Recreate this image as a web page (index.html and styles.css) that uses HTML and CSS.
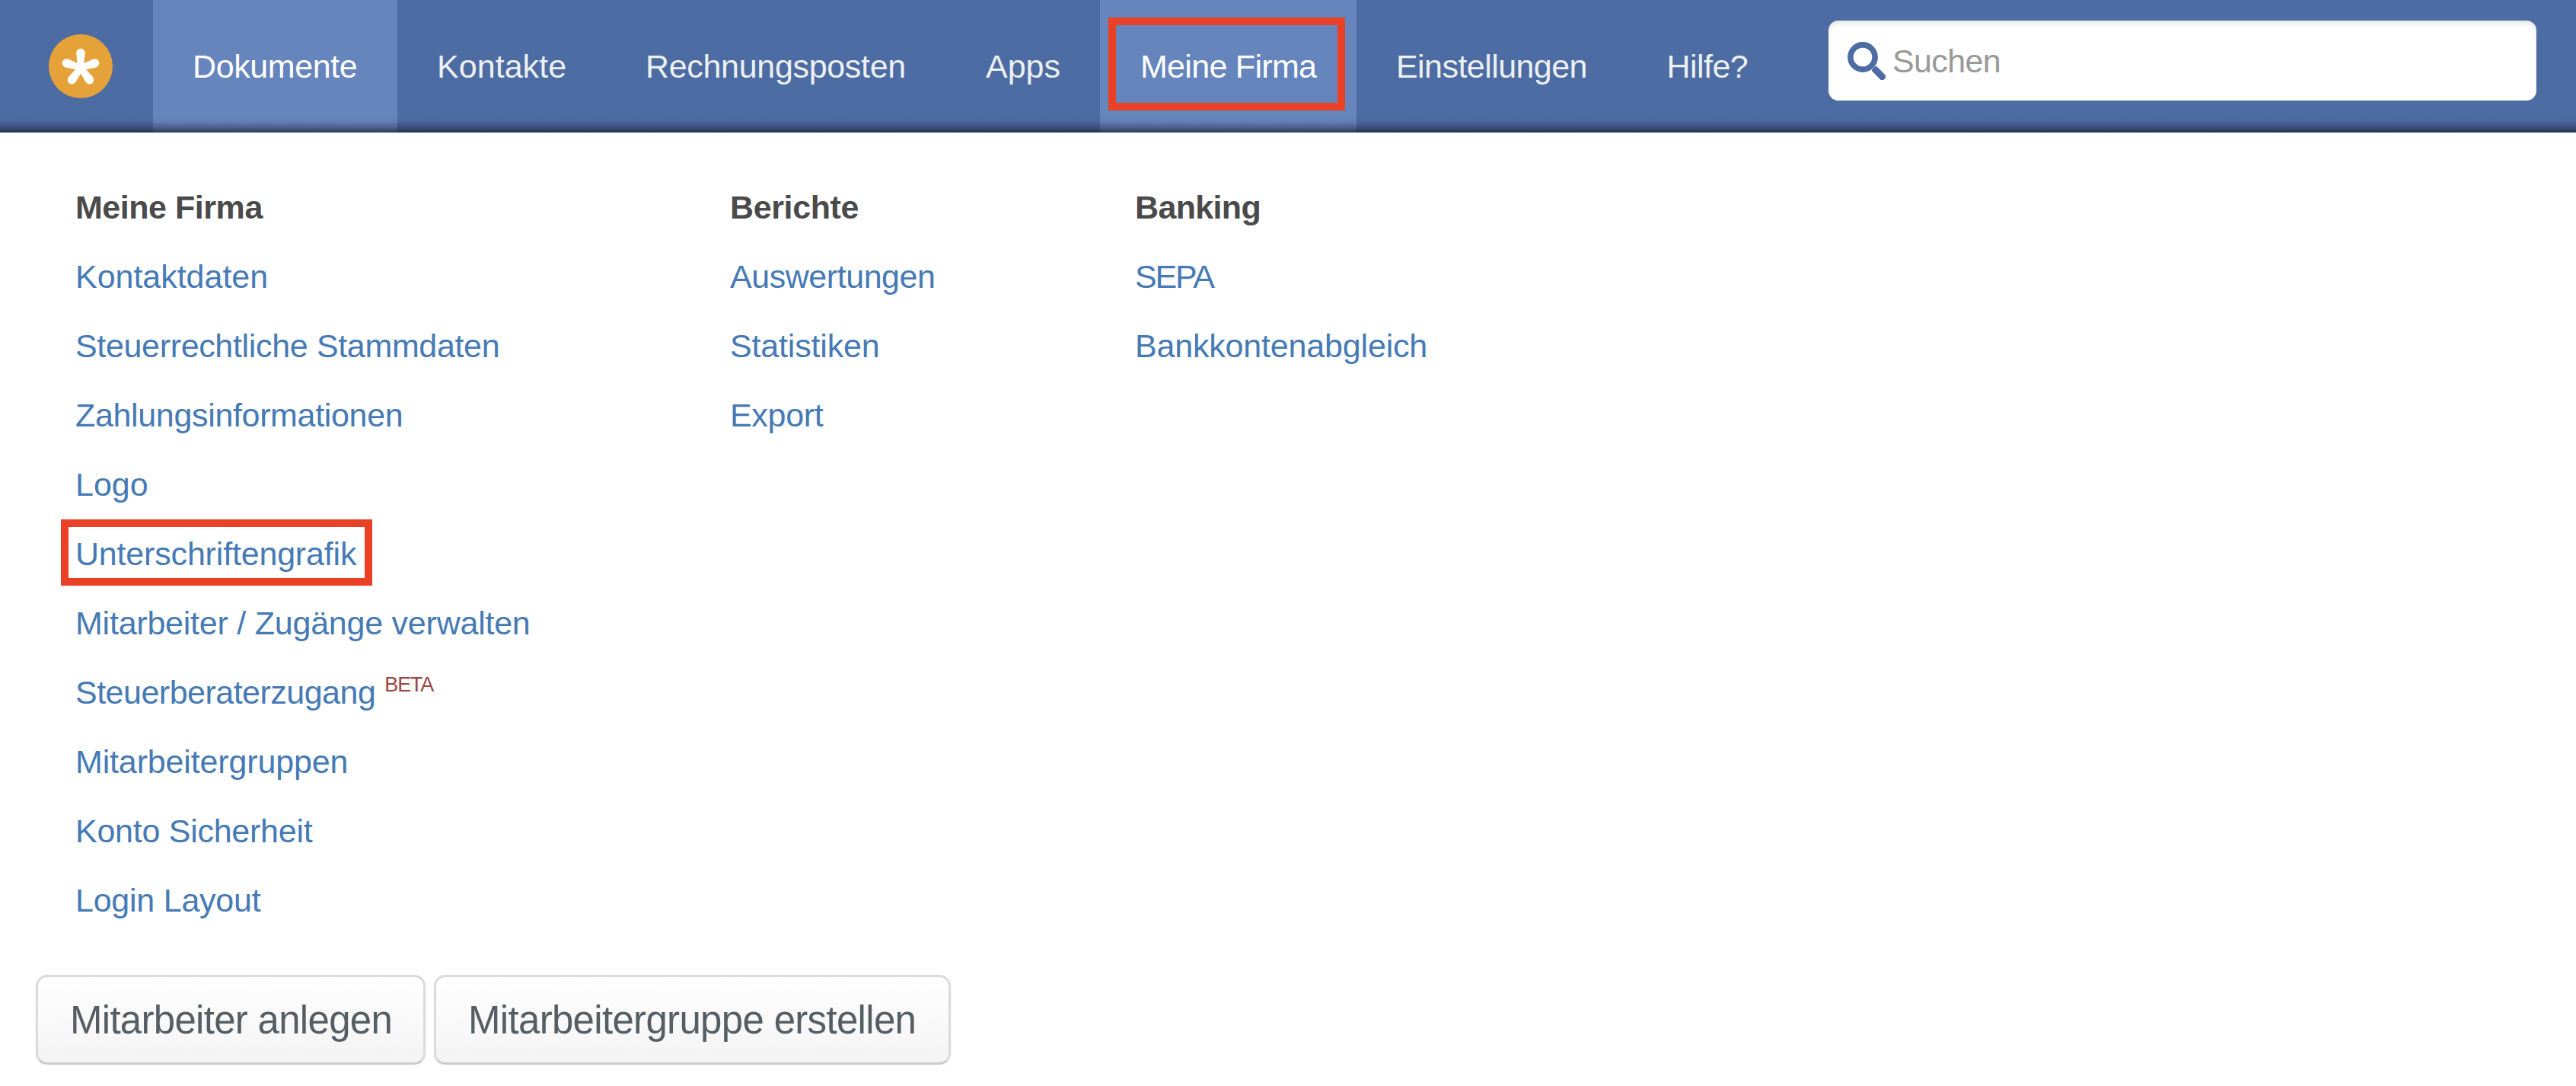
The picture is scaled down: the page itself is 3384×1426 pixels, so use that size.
FILE: index.html
```html
<!DOCTYPE html>
<html lang="de">
<head>
<meta charset="utf-8">
<title>Meine Firma</title>
<link rel="stylesheet" href="styles.css">
</head>
<body>
<header class="topbar">
  <a class="brand" href="#">
    <svg class="brand-icon" viewBox="-42 -42 84 84" aria-hidden="true">
      <circle r="42" fill="#e5a239"/>
      <g transform="translate(0 2)" fill="#fff">
        <path id="arm" d="M-3.8 0 L-5.8 -19.4 A5.8 5.9 0 0 1 5.8 -19.4 L3.8 0 Z"/>
        <use href="#arm" transform="rotate(72)"/>
        <use href="#arm" transform="rotate(144)"/>
        <use href="#arm" transform="rotate(216)"/>
        <use href="#arm" transform="rotate(288)"/>
      </g>
    </svg>
  </a>
  <nav class="nav">
    <a class="nav-item nav-dokumente active" href="#">Dokumente</a>
    <a class="nav-item nav-kontakte" href="#">Kontakte</a>
    <a class="nav-item nav-posten" href="#">Rechnungsposten</a>
    <a class="nav-item nav-apps" href="#">Apps</a>
    <a class="nav-item nav-firma active marked" href="#">Meine Firma</a>
    <a class="nav-item nav-einstellungen" href="#">Einstellungen</a>
    <a class="nav-item nav-hilfe" href="#">Hilfe?</a>
  </nav>
  <label class="search">
    <svg class="search-icon" viewBox="0 0 50 50" aria-hidden="true">
      <circle cx="20" cy="20" r="16.1" fill="none" stroke="#4c6ca3" stroke-width="7.6"/>
      <rect x="20" y="-4.4" width="20.5" height="8.8" rx="2.6" transform="translate(20 20) rotate(45)" fill="#4c6ca3"/>
    </svg>
    <span class="search-text">Suchen</span>
  </label>
</header>
<main class="menu">
  <div class="columns">
    <section class="column">
      <h2 class="heading h-firma">Meine Firma</h2>
      <a class="link l-kontaktdaten" href="#">Kontaktdaten</a>
      <a class="link l-stammdaten" href="#">Steuerrechtliche Stammdaten</a>
      <a class="link l-zahlung" href="#">Zahlungsinformationen</a>
      <a class="link l-logo" href="#">Logo</a>
      <a class="link l-unterschrift marked" href="#">Unterschriftengrafik</a>
      <a class="link l-mitarbeiter" href="#">Mitarbeiter / Zugänge verwalten</a>
      <a class="link l-berater" href="#">Steuerberaterzugang<span class="beta">BETA</span></a>
      <a class="link l-gruppen" href="#">Mitarbeitergruppen</a>
      <a class="link l-konto" href="#">Konto Sicherheit</a>
      <a class="link l-login" href="#">Login Layout</a>
    </section>
    <section class="column">
      <h2 class="heading h-berichte">Berichte</h2>
      <a class="link l-auswertungen" href="#">Auswertungen</a>
      <a class="link l-statistiken" href="#">Statistiken</a>
      <a class="link l-export" href="#">Export</a>
    </section>
    <section class="column">
      <h2 class="heading h-banking">Banking</h2>
      <a class="link l-sepa" href="#">SEPA</a>
      <a class="link l-bank" href="#">Bankkontenabgleich</a>
    </section>
  </div>
  <div class="actions">
    <button class="button button-anlegen">Mitarbeiter anlegen</button>
    <button class="button button-gruppe">Mitarbeitergruppe erstellen</button>
  </div>
</main>
</body>
</html>
```
FILE: styles.css
```css
*,
*::after { box-sizing: border-box; }

body {
  margin: 0;
  background: #fff;
  font-family: "Liberation Sans", Arial, sans-serif;
  font-size: 43px;
}

a { text-decoration: none; }

/* Top bar */
.topbar {
  position: relative;
  display: flex;
  height: 174px;
  padding-right: 52px;
  background: #4c6ca3;
}

.topbar::after {
  content: "";
  position: absolute;
  left: 0;
  right: 0;
  bottom: 0;
  height: 22px;
  background: linear-gradient(rgba(16, 20, 30, 0), rgba(16, 20, 30, 0.05) 35%, rgba(16, 20, 30, 0.3) 68%, rgba(16, 20, 30, 0.62) 96%, rgba(16, 20, 30, 0.68));
  pointer-events: none;
}

.brand {
  flex: none;
  width: 201px;
  padding: 45px 0 0 64px;
}

.brand-icon {
  display: block;
  width: 84px;
  height: 84px;
}

.nav {
  display: flex;
  flex: none;
  width: 2201px;
}

.nav-item {
  position: relative;
  flex: none;
  padding-left: 52px;
  line-height: 174px;
  white-space: nowrap;
  color: #ecf0f1;
}

.nav-item.active {
  background: #6685bd;
  color: #fff;
}

.nav-dokumente { width: 321px; letter-spacing: -0.4px; }
.nav-kontakte { width: 274px; letter-spacing: 0.05px; }
.nav-posten { width: 447px; letter-spacing: -0.32px; }
.nav-apps { width: 202px; letter-spacing: 0; }
.nav-firma { width: 337px; padding-left: 53px; letter-spacing: -0.7px; }
.nav-einstellungen { width: 355.6px; letter-spacing: -0.56px; }
.nav-hilfe { width: 212px; letter-spacing: -0.55px; }

/* Red highlight frames */
.marked { position: relative; }

.marked::after {
  content: "";
  position: absolute;
  border: 10px solid #ea4025;
}

.nav-item.marked::after {
  left: 11px;
  top: 23px;
  width: 311px;
  height: 122px;
}

.link.marked::after {
  left: -19px;
  top: 0;
  width: 409px;
  height: 87px;
}

.search {
  display: flex;
  flex: 1;
  height: 105px;
  margin-top: 27px;
  padding: 0 25px;
  border-radius: 13px;
  background: #fff;
  box-shadow: inset 0 5px 6px -1px rgba(0, 0, 0, 0.1);
}

.search-icon {
  width: 50px;
  height: 50px;
  margin: 28px 9px 0 0;
}

.search-text {
  line-height: 106px;
  letter-spacing: -0.65px;
  color: #999;
}

/* Menu */
.menu { padding-top: 53px; }

.columns {
  display: grid;
  grid-template-columns: 860px 532px 1fr;
  padding-left: 99px;
}

.heading,
.link {
  display: block;
  height: 91px;
  margin: 0;
  font-size: 43px;
  line-height: 91px;
  white-space: nowrap;
}

.heading { font-weight: bold; color: #4a4a4a; }
.link { color: #467ab5; }

.h-firma { letter-spacing: -0.46px; }
.h-berichte { letter-spacing: -0.38px; }
.h-banking { letter-spacing: -0.66px; }
.l-kontaktdaten { letter-spacing: -0.03px; }
.l-stammdaten { letter-spacing: -0.34px; }
.l-zahlung { letter-spacing: -0.34px; }
.l-logo { letter-spacing: 0; }
.l-unterschrift { letter-spacing: -0.18px; }
.l-mitarbeiter { letter-spacing: -0.23px; }
.l-berater { letter-spacing: -0.51px; }
.l-gruppen { letter-spacing: -0.15px; }
.l-konto { letter-spacing: -0.26px; }
.l-login { letter-spacing: -0.24px; }
.l-auswertungen { letter-spacing: -0.45px; }
.l-statistiken { letter-spacing: -0.17px; }
.l-export { letter-spacing: -0.32px; }
.l-sepa { letter-spacing: -2.2px; }
.l-bank { letter-spacing: -0.18px; }

.beta {
  margin-left: 12px;
  font-size: 27px;
  line-height: 1;
  letter-spacing: -1.17px;
  vertical-align: 16px;
  color: #9d4441;
}

/* Actions */
.actions {
  display: flex;
  gap: 11px;
  padding: 52px 0 0 47px;
}

.button {
  height: 118px;
  padding: 0 0 0 42px;
  border: 3px solid #dadcdc;
  border-bottom-color: #c9caca;
  border-radius: 15px;
  background: linear-gradient(#fff, #f3f3f3);
  box-shadow: 0 2px 3px rgba(0, 0, 0, 0.06);
  font-family: inherit;
  font-size: 51px;
  text-align: left;
  white-space: nowrap;
  letter-spacing: -0.71px;
  color: #555e64;
}

.button-anlegen { width: 512px; }
.button-gruppe { width: 679px; letter-spacing: -0.68px; }
```
